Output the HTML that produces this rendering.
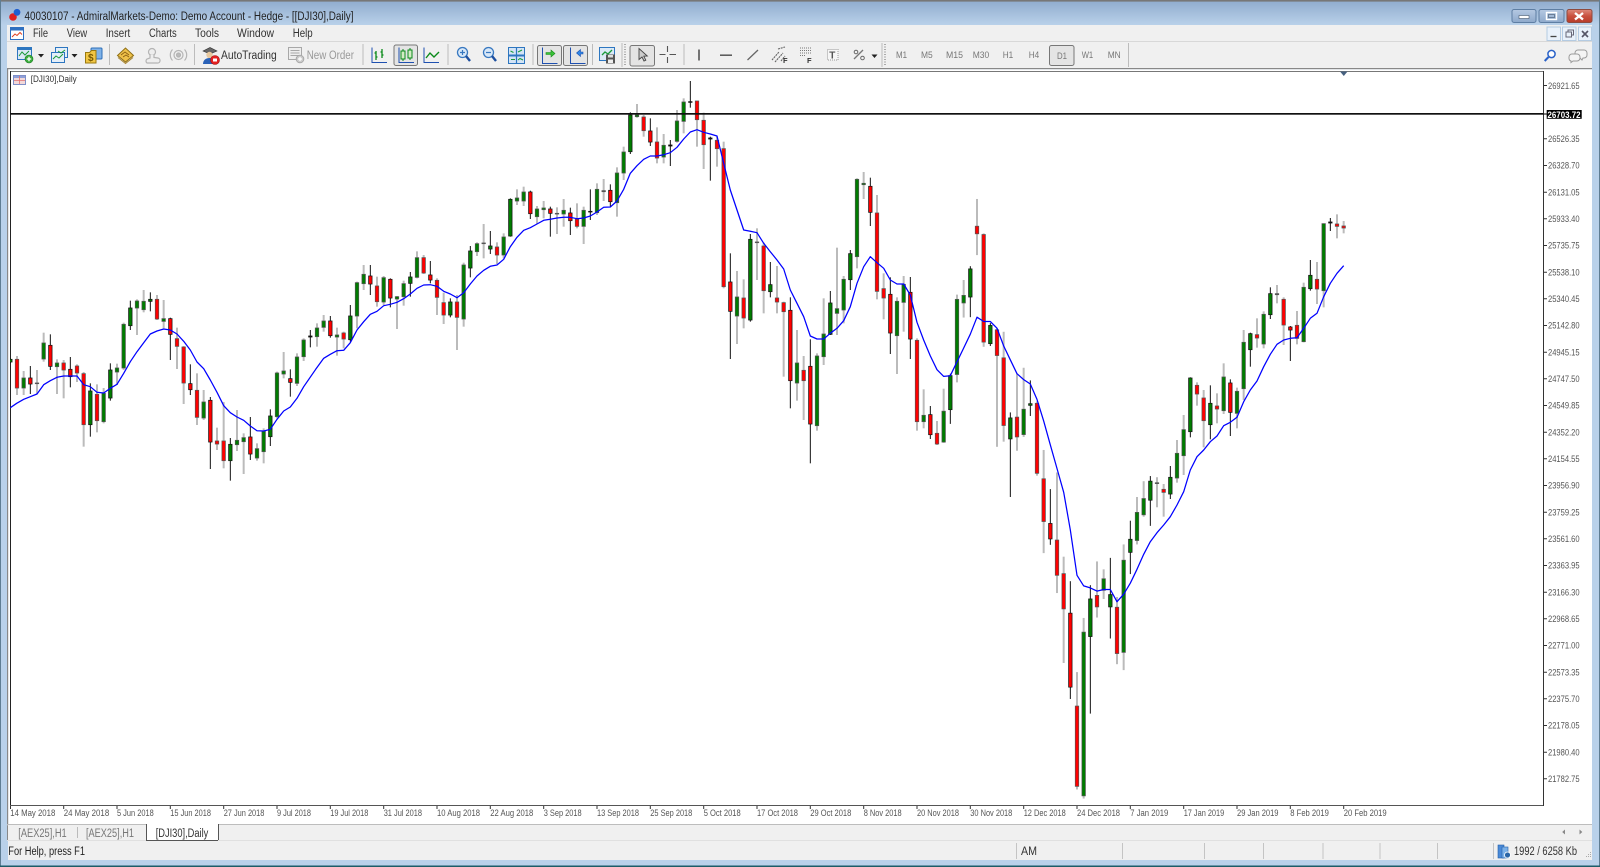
<!DOCTYPE html>
<html lang="en"><head><meta charset="utf-8"><title>40030107 - AdmiralMarkets-Demo</title>
<style>
html,body{margin:0;padding:0;background:#fff;width:1600px;height:867px;overflow:hidden}
svg#r{display:block;position:absolute;left:0;top:0;filter:blur(.35px)}
text{font-family:"Liberation Sans",sans-serif;fill:#222}
.t{font-size:11.5px}
.m{font-size:11.5px;fill:#333}
.d{font-size:9.6px;fill:#555}
.p{font-size:9.6px;fill:#555}
.f{font-size:9.6px;fill:#777}
.g{font-size:11.5px;fill:#777}
.n{fill:none}
</style></head><body>
<svg id="r" width="1600" height="867" viewBox="0 0 1600 867" xmlns="http://www.w3.org/2000/svg">
<defs>
<linearGradient id="tb" x1="0" y1="0" x2="0" y2="1"><stop offset="0" stop-color="#8fabcd"/><stop offset="1" stop-color="#b9d1ea"/></linearGradient>
<linearGradient id="btn" x1="0" y1="0" x2="0" y2="1"><stop offset="0" stop-color="#b5c9e2"/><stop offset="1" stop-color="#8ea9cb"/></linearGradient>
<linearGradient id="cl" x1="0" y1="0" x2="0" y2="1"><stop offset="0" stop-color="#dd8a7c"/><stop offset=".5" stop-color="#c9513f"/><stop offset="1" stop-color="#b83c2a"/></linearGradient>
<clipPath id="cc"><rect x="10" y="72" width="1533" height="733"/></clipPath>
</defs>
<!-- frame -->
<rect width="1600" height="867" fill="#b9d1ea"/>
<rect width="1600" height="25" fill="url(#tb)"/>
<rect width="1600" height="1.6" fill="#777"/>
<rect y="0" width="1" height="867" fill="#5f7d93"/>
<rect x="1599" y="0" width="1" height="867" fill="#5f7d93"/>
<rect y="865.5" width="1600" height="1.5" fill="#1c5c68"/>
<rect x="7" y="25" width="1585" height="16" fill="#f0f0f0"/>
<rect x="7" y="41" width="1585" height="1.4" fill="#d8d8d8"/>
<rect x="7" y="42" width="1585" height="26" fill="#f0f0f0"/>
<rect x="7" y="68" width="1585" height="1.3" fill="#888"/>
<rect x="8" y="69.3" width="1584" height="755" fill="#fff"/>
<rect x="7" y="68" width="1.2" height="772" fill="#888"/>
<rect x="7" y="824" width="1585" height="1.4" fill="#bdbdbd"/>
<rect x="8" y="825" width="1584" height="15" fill="#f0f0f0"/>
<rect x="7" y="840" width="1585" height="1" fill="#e0e0e0"/>
<rect x="8" y="841" width="1584" height="19" fill="#f0f0f0"/>

<!-- title bar -->
<circle cx="13" cy="17" r="3.8" fill="#e02020"/><circle cx="17" cy="12.3" r="3.4" fill="#1f5fd0"/>
<text class="t" x="24.5" y="20" textLength="329" lengthAdjust="spacingAndGlyphs">40030107 - AdmiralMarkets-Demo: Demo Account - Hedge - [[DJI30],Daily]</text>
<g stroke="#5e7ea3" stroke-width="1">
<rect x="1512" y="9.5" width="24" height="13" rx="2" fill="url(#btn)"/>
<rect x="1539" y="9.5" width="25" height="13" rx="2" fill="url(#btn)"/>
<rect x="1567" y="9.5" width="25" height="13" rx="2" fill="url(#cl)" stroke="#8e4a3e"/></g>
<rect x="1519" y="15.5" width="10" height="3" fill="#fff" stroke="#45566c" stroke-width=".6"/>
<rect x="1546.5" y="12.5" width="10" height="7" fill="none" stroke="#fff" stroke-width="1.4"/><rect x="1548.5" y="14.5" width="6" height="3" fill="none" stroke="#45566c" stroke-width=".6"/>
<path d="M1575 13l8 6.500M1583 13l-8 6.500" stroke="#fff" stroke-width="2.400"/>

<!-- menu -->
<g>
<rect x="10.500" y="27.500" width="13" height="12" fill="#fff" stroke="#2e6fc0"/><rect x="10.500" y="27.500" width="13" height="3" fill="#2e6fc0"/>
<path d="M12 37l3-3 2 1.500 3-3 2 2" fill="none" stroke="#e04020"/>
</g>
<text class="m" x="33" y="37" textLength="15" lengthAdjust="spacingAndGlyphs">File</text>
<text class="m" x="66.700" y="37" textLength="20.500" lengthAdjust="spacingAndGlyphs">View</text>
<text class="m" x="105.700" y="37" textLength="24.500" lengthAdjust="spacingAndGlyphs">Insert</text>
<text class="m" x="149" y="37" textLength="27.700" lengthAdjust="spacingAndGlyphs">Charts</text>
<text class="m" x="195" y="37" textLength="24" lengthAdjust="spacingAndGlyphs">Tools</text>
<text class="m" x="237" y="37" textLength="37" lengthAdjust="spacingAndGlyphs">Window</text>
<text class="m" x="292.700" y="37" textLength="20" lengthAdjust="spacingAndGlyphs">Help</text>
<g fill="#e9f1fa" stroke="#b4cbe2"><rect x="1547" y="27" width="13.500" height="13.500"/><rect x="1562.500" y="27" width="13.500" height="13.500"/><rect x="1578.500" y="27" width="13" height="13.500"/></g>
<path d="M1550.500 36.500h6" stroke="#444" stroke-width="1.300"/>
<path d="M1566 32h5.500v5h-5.500zM1568 32v-2h5.500v5h-2" fill="none" stroke="#667" stroke-width="1"/>
<path d="M1582 31l6 6M1588 31l-6 6" stroke="#556" stroke-width="1.600"/>

<!-- toolbar separators -->
<g fill="#bcbcbc"><rect x="109" y="44" width="1" height="21"/><rect x="194" y="44" width="1" height="21"/><rect x="362.500" y="44" width="1" height="21"/><rect x="447.500" y="44" width="1" height="21"/><rect x="532.500" y="44" width="1" height="21"/><rect x="592" y="44" width="1" height="21"/><rect x="621.500" y="43" width="1" height="24"/><rect x="683.500" y="44" width="1" height="21"/><rect x="881.500" y="43" width="1" height="24"/><rect x="1128" y="43" width="1" height="24"/></g>
<path d="M625 44v22M885 44v22" stroke="#aaa" stroke-width="2" stroke-dasharray="1 1.500"/>

<!-- new chart -->
<g transform="translate(17,47)"><rect x=".5" y=".5" width="14" height="12" fill="#dbe9f7" stroke="#2d76c0"/><rect x=".5" y=".5" width="14" height="2.500" fill="#2d76c0"/><path d="M2 9l3-4 3 3 4-4" fill="none" stroke="#1a9a3a"/><circle cx="12" cy="12" r="4" fill="#39ad3c" stroke="#1d7a22" stroke-width=".6"/><path d="M9.800 12h4.400M12 9.800v4.400" stroke="#fff" stroke-width="1.300"/></g>
<path d="M38 54h6l-3 3.500z" fill="#222"/>
<!-- profiles -->
<g transform="translate(51,47)"><rect x="4.500" y=".5" width="12" height="10" fill="#e5eff9" stroke="#2d76c0"/><rect x=".5" y="5.500" width="13" height="10" fill="#e5eff9" stroke="#2d76c0"/><path d="M2 12l3-3 3 2 4-4M7 4l3 2 4-3" fill="none" stroke="#1a9a3a"/></g>
<path d="M71.500 54h6l-3 3.500z" fill="#222"/>
<!-- market -->
<g transform="translate(85,47)"><rect x="6" y="1" width="11" height="11" rx="1" fill="#7fb2e8" stroke="#2e6fb8"/><path d="M.5 5.500h4l2-2h4.500v12.500h-10.500z" fill="#f1c644" stroke="#9a7a10"/><text x="3" y="14" style="font-size:10px;font-weight:bold;fill:#7a5a00">$</text></g>
<!-- book -->
<g transform="translate(117,47)"><path d="M.5 8.500l8-7.500 8 7.500-8 6.500z" fill="#eec14a" stroke="#8e6e14"/><path d="M4 8l4-3 4 3M6 10l3-2 3 2" fill="none" stroke="#8a5e10" stroke-width=".8"/><path d="M1 10.500l7.500 6 7.500-6" fill="none" stroke="#a98530"/></g>
<!-- cloud person -->
<g transform="translate(143,47)" fill="none" stroke="#b4b4b4" stroke-width="1.200"><circle cx="9" cy="5" r="3.500" fill="#eee"/><path d="M7 8v3l-3 1a2.500 2.500 0 0 0 0 4h10a2.500 2.500 0 0 0 1-5l-4-.5v-2.500" fill="#eee"/></g>
<!-- signal -->
<g transform="translate(170,47)" fill="none" stroke="#b4b4b4" stroke-width="1.200"><circle cx="8.500" cy="8" r="2" fill="#bbb"/><circle cx="8.500" cy="8" r="4.500"/><path d="M2.500 2.500a8 8 0 0 0 0 11M14.500 2.500a8 8 0 0 1 0 11"/></g>
<!-- autotrading -->
<g transform="translate(202,46)"><path d="M1 5l7-3.500 7 3.500-7 3z" fill="#666" stroke="#333" stroke-width=".6"/><circle cx="7.500" cy="9" r="3.200" fill="#e8c9a0"/><path d="M1 18c0-4 3-6 6.500-6s6 2 6 6z" fill="#2a62b8"/><circle cx="13" cy="14" r="4.500" fill="#e42020" stroke="#a01010" stroke-width=".6"/><rect x="11" y="12.500" width="4" height="3" fill="#fff"/></g>
<text class="m" x="221" y="59" textLength="55.700" lengthAdjust="spacingAndGlyphs">AutoTrading</text>
<!-- new order -->
<g transform="translate(288,47)" stroke="#a8a8a8" fill="none"><rect x=".5" y=".5" width="13" height="12" fill="#eee"/><path d="M2.500 3.500h9M2.500 6h9M2.500 8.500h9"/><circle cx="12" cy="12" r="3.800" fill="#ccc"/><path d="M10 12h4M12 10v4" stroke="#fff" stroke-width="1.200"/></g>
<text class="m" x="306.700" y="59" textLength="47.300" lengthAdjust="spacingAndGlyphs" style="fill:#999">New Order</text>

<!-- chart type -->
<g transform="translate(371,47)" fill="none"><path d="M1 .5v15h15" stroke="#1e50b0"/><path d="M5 4v9M3.500 6h1.500M5 10h1.500M11 2v9M9.500 5h1.500M11 8h1.500" stroke="#0a8a1a" stroke-width="1.300"/></g>
<rect x="394" y="45" width="23.500" height="20.500" rx="2" fill="#e4e4e4" stroke="#777"/>
<g transform="translate(398,47)"><path d="M1 .5v15h15" stroke="#1e50b0" fill="none"/><rect x="3" y="4" width="4" height="8" fill="#d4ecc4" stroke="#0a8a1a"/><rect x="10" y="3" width="4" height="8" fill="#d4ecc4" stroke="#0a8a1a"/><path d="M5 2v2M5 12v2M12 1v2M12 11v2" stroke="#0a8a1a"/></g>
<g transform="translate(423,47)" fill="none"><path d="M1 .5v15h15" stroke="#1e50b0"/><path d="M3 11l4-5 4 4 5-5" stroke="#0a8a1a" stroke-width="1.400"/></g>
<!-- zoom -->
<g transform="translate(457,47)" fill="none"><circle cx="5.500" cy="5.500" r="5" fill="#d8e8f8" stroke="#3878c0" stroke-width="1.300"/><path d="M9 9l4 5" stroke="#1e50a0" stroke-width="2.400"/><path d="M3 5.500h5M5.500 3v5" stroke="#3878c0" stroke-width="1.200"/></g>
<g transform="translate(483,47)" fill="none"><circle cx="5.500" cy="5.500" r="5" fill="#d8e8f8" stroke="#3878c0" stroke-width="1.300"/><path d="M9 9l4 5" stroke="#1e50a0" stroke-width="2.400"/><path d="M3 5.500h5" stroke="#3878c0" stroke-width="1.200"/></g>
<g transform="translate(508,47)"><rect x=".5" y=".5" width="16" height="16" fill="#d4e4f6" stroke="#2d76c0"/><path d="M8.500 0v17" stroke="#2d76c0" stroke-width="1.200"/><path d="M0 8.500h17" stroke="#2d76c0" stroke-width="2"/><path d="M2.500 4l3 1.500M10 5l4-2M3 12.500h4M10 13l2-1.500 3 1.500" stroke="#1a9a3a" fill="none"/></g>
<!-- shift -->
<rect x="537.500" y="45.500" width="24" height="20" rx="2" fill="#e4e4e4" stroke="#777"/>
<g transform="translate(541,47)"><path d="M1.500 .5v16h15" stroke="#1e50b0" fill="none"/><path d="M5 5.500h5v-2.500l4 3.500-4 3.500v-2.500h-5z" fill="#3ac23a" stroke="#1a8a1a" stroke-width=".6"/></g>
<rect x="563.500" y="45.500" width="24" height="20" rx="2" fill="#e4e4e4" stroke="#777"/>
<g transform="translate(567,47)"><path d="M3.500 .5v16h15" stroke="#1e50b0" fill="none"/><path d="M16 5h-2.500v-2.500l-4 3.500 4 3.500v-2.500h2.500z" fill="#2e86e6" stroke="#1e50b0" stroke-width=".6"/></g>
<!-- save chart -->
<g transform="translate(599,47)"><rect x=".5" y=".5" width="15" height="13" fill="#dbe9f7" stroke="#2d76c0"/><path d="M3 8l3-3 3 2 4-4" fill="none" stroke="#1a9a3a" stroke-width="1.300"/><rect x="7" y="7.500" width="9" height="9" fill="#555"/><rect x="9" y="8" width="5" height="2.500" fill="#ddd"/><rect x="9" y="12.500" width="5" height="3.500" fill="#eee"/></g>
<!-- cursor -->
<rect x="630" y="45.500" width="24.500" height="20.500" rx="2" fill="#e4e4e4" stroke="#777"/>
<path d="M639 48.500v11l3-2.500 2 4 1.800-.8-2-4 3.500-.2z" fill="#ccc" stroke="#444" stroke-width=".9"/>
<path d="M667.500 46v6M667.500 57v6M659.500 54.500h6M669.500 54.500h6.500" stroke="#555" stroke-width="1.100"/>
<path d="M699 49.500v11" stroke="#555" stroke-width="1.600"/>
<path d="M720 55.200h12" stroke="#555" stroke-width="1.500"/>
<path d="M747.500 60l10.500-10" stroke="#666" stroke-width="1.300"/>
<path d="M772 60l7-8M775 62l8-9M778 49l7-2M781 61l4-5" stroke="#666" stroke-width="1.100" fill="none" stroke-dasharray="2 .8"/><text x="783" y="63" style="font-size:7.500px;font-weight:bold;fill:#333">F</text>
<path d="M800 48h11M800 50.500h11M800 53h11M800 55.500h6" stroke="#777" stroke-width="1" stroke-dasharray="1 1" fill="none"/><text x="807" y="63" style="font-size:7.500px;font-weight:bold;fill:#333">F</text>
<rect x="827.500" y="49.500" width="10.500" height="10.500" fill="#f6f6f6" stroke="#999" stroke-dasharray="1 1"/><text x="829.200" y="58.500" style="font-size:10px;font-weight:bold;fill:#555">T</text>
<path d="M854 59l9-9" stroke="#777" stroke-width="1.300"/><circle cx="856" cy="52" r="1.800" fill="none" stroke="#666"/><circle cx="862.500" cy="58" r="1.800" fill="none" stroke="#666"/>
<path d="M871.500 54.500h6l-3 3.500z" fill="#222"/>
<!-- timeframes -->
<rect x="1049.500" y="45.500" width="24.500" height="20" rx="2" fill="#e4e4e4" stroke="#777"/>
<text class="f" x="896" y="58" textLength="11" lengthAdjust="spacingAndGlyphs">M1</text>
<text class="f" x="921" y="58" textLength="11.700" lengthAdjust="spacingAndGlyphs">M5</text>
<text class="f" x="946" y="58" textLength="17" lengthAdjust="spacingAndGlyphs">M15</text>
<text class="f" x="972.700" y="58" textLength="16.500" lengthAdjust="spacingAndGlyphs">M30</text>
<text class="f" x="1002.700" y="58" textLength="10.500" lengthAdjust="spacingAndGlyphs">H1</text>
<text class="f" x="1028.700" y="58" textLength="10.500" lengthAdjust="spacingAndGlyphs">H4</text>
<text class="f" x="1057" y="59" textLength="10" lengthAdjust="spacingAndGlyphs">D1</text>
<text class="f" x="1081.700" y="58" textLength="11.500" lengthAdjust="spacingAndGlyphs">W1</text>
<text class="f" x="1107.700" y="58" textLength="13" lengthAdjust="spacingAndGlyphs">MN</text>
<!-- search / chat -->
<circle cx="1551.500" cy="54" r="3.600" fill="#fff" stroke="#2a62c8" stroke-width="1.500"/><path d="M1548.500 57l-3.800 4" stroke="#2a62c8" stroke-width="2"/>
<g fill="#f4f4f4" stroke="#9a9a9a"><path d="M1578 50h6a3 3 0 0 1 3 3v2a3 3 0 0 1-3 3h-1l-1 2-2-2h-2a3 3 0 0 1-3-3v-2a3 3 0 0 1 3-3z"/><path d="M1572 54h5a3 3 0 0 1 3 3v1a3 3 0 0 1-3 3h-4l-2 1.500v-1.500a3 3 0 0 1-2-3v-1a3 3 0 0 1 3-3z"/></g>

<!-- chart frame -->
<rect x="10" y="71" width="1533.500" height="1" fill="#777"/>
<rect x="10" y="71" width="1" height="735" fill="#222"/>
<rect x="10" y="805" width="1534" height="1" fill="#555"/>
<rect x="1543" y="71" width="1" height="735" fill="#333"/>
<path d="M1340 71.500h7.500l-3.700 4.500z" fill="#46607f"/>
<g transform="translate(13,75)"><rect x=".5" y=".5" width="12" height="9" fill="#f3d9d9" stroke="#7f8fc8"/><rect x="1" y="1" width="11" height="2" fill="#8f9fd8"/><path d="M6.500 1v8M1 5.500h11" stroke="#e07070" stroke-width=".8"/></g>
<text class="d" x="30.700" y="82" textLength="46" lengthAdjust="spacingAndGlyphs" style="fill:#333">[DJI30],Daily</text>

<g id="c"></g>

<rect x="10" y="113" width="1533" height="1.700" fill="#111"/>

<!-- price axis -->
<g class="p">
<path d="M1543 85.500h4M1543 138.800h4M1543 165.500h4M1543 192.200h4M1543 218.800h4M1543 245.500h4M1543 272.200h4M1543 298.800h4M1543 325.500h4M1543 352.200h4M1543 378.800h4M1543 405.500h4M1543 432.200h4M1543 458.800h4M1543 485.500h4M1543 512.200h4M1543 538.800h4M1543 565.500h4M1543 592.200h4M1543 618.800h4M1543 645.500h4M1543 672.200h4M1543 698.800h4M1543 725.500h4M1543 752.200h4M1543 778.800h4" stroke="#333" fill="none"/>
<text class="p" x="1548" y="88.800" textLength="31.600" lengthAdjust="spacingAndGlyphs">26921.65</text>
<text class="p" x="1548" y="142" textLength="31.600" lengthAdjust="spacingAndGlyphs">26526.35</text>
<text class="p" x="1548" y="168.700" textLength="31.600" lengthAdjust="spacingAndGlyphs">26328.70</text>
<text class="p" x="1548" y="195.400" textLength="31.600" lengthAdjust="spacingAndGlyphs">26131.05</text>
<text class="p" x="1548" y="222" textLength="31.600" lengthAdjust="spacingAndGlyphs">25933.40</text>
<text class="p" x="1548" y="248.700" textLength="31.600" lengthAdjust="spacingAndGlyphs">25735.75</text>
<text class="p" x="1548" y="275.400" textLength="31.600" lengthAdjust="spacingAndGlyphs">25538.10</text>
<text class="p" x="1548" y="302" textLength="31.600" lengthAdjust="spacingAndGlyphs">25340.45</text>
<text class="p" x="1548" y="328.700" textLength="31.600" lengthAdjust="spacingAndGlyphs">25142.80</text>
<text class="p" x="1548" y="355.400" textLength="31.600" lengthAdjust="spacingAndGlyphs">24945.15</text>
<text class="p" x="1548" y="382" textLength="31.600" lengthAdjust="spacingAndGlyphs">24747.50</text>
<text class="p" x="1548" y="408.700" textLength="31.600" lengthAdjust="spacingAndGlyphs">24549.85</text>
<text class="p" x="1548" y="435.400" textLength="31.600" lengthAdjust="spacingAndGlyphs">24352.20</text>
<text class="p" x="1548" y="462" textLength="31.600" lengthAdjust="spacingAndGlyphs">24154.55</text>
<text class="p" x="1548" y="488.700" textLength="31.600" lengthAdjust="spacingAndGlyphs">23956.90</text>
<text class="p" x="1548" y="515.400" textLength="31.600" lengthAdjust="spacingAndGlyphs">23759.25</text>
<text class="p" x="1548" y="542" textLength="31.600" lengthAdjust="spacingAndGlyphs">23561.60</text>
<text class="p" x="1548" y="568.700" textLength="31.600" lengthAdjust="spacingAndGlyphs">23363.95</text>
<text class="p" x="1548" y="595.400" textLength="31.600" lengthAdjust="spacingAndGlyphs">23166.30</text>
<text class="p" x="1548" y="622" textLength="31.600" lengthAdjust="spacingAndGlyphs">22968.65</text>
<text class="p" x="1548" y="648.700" textLength="31.600" lengthAdjust="spacingAndGlyphs">22771.00</text>
<text class="p" x="1548" y="675.400" textLength="31.600" lengthAdjust="spacingAndGlyphs">22573.35</text>
<text class="p" x="1548" y="702" textLength="31.600" lengthAdjust="spacingAndGlyphs">22375.70</text>
<text class="p" x="1548" y="728.700" textLength="31.600" lengthAdjust="spacingAndGlyphs">22178.05</text>
<text class="p" x="1548" y="755.400" textLength="31.600" lengthAdjust="spacingAndGlyphs">21980.40</text>
<text class="p" x="1548" y="782" textLength="31.600" lengthAdjust="spacingAndGlyphs">21782.75</text>
</g>
<rect x="1546.700" y="110" width="35" height="8.800" fill="#000"/>
<rect x="1543" y="113.500" width="4" height="1" fill="#000"/>
<text x="1547.500" y="117.800" textLength="33" lengthAdjust="spacingAndGlyphs" style="font-size:9.600px;fill:#fff;font-weight:bold">26703.72</text>

<!-- time axis -->
<path d="M10.500 806v3M63.700 806v3M117 806v3M170.300 806v3M223.700 806v3M277 806v3M330.300 806v3M383.700 806v3M437 806v3M490.300 806v3M543.700 806v3M597 806v3M650.300 806v3M703.700 806v3M757 806v3M810.300 806v3M863.700 806v3M917 806v3M970.300 806v3M1023.700 806v3M1077 806v3M1130.300 806v3M1183.700 806v3M1237 806v3M1290.300 806v3M1343.700 806v3" stroke="#333" fill="none"/>
<text class="d" x="10.300" y="816" textLength="45" lengthAdjust="spacingAndGlyphs">14 May 2018</text>
<text class="d" x="63.700" y="816" textLength="45.500" lengthAdjust="spacingAndGlyphs">24 May 2018</text>
<text class="d" x="117" y="816" textLength="36.700" lengthAdjust="spacingAndGlyphs">5 Jun 2018</text>
<text class="d" x="170.300" y="816" textLength="40.700" lengthAdjust="spacingAndGlyphs">15 Jun 2018</text>
<text class="d" x="223.700" y="816" textLength="40.700" lengthAdjust="spacingAndGlyphs">27 Jun 2018</text>
<text class="d" x="277" y="816" textLength="34" lengthAdjust="spacingAndGlyphs">9 Jul 2018</text>
<text class="d" x="330.300" y="816" textLength="38" lengthAdjust="spacingAndGlyphs">19 Jul 2018</text>
<text class="d" x="383.700" y="816" textLength="38.300" lengthAdjust="spacingAndGlyphs">31 Jul 2018</text>
<text class="d" x="437" y="816" textLength="43" lengthAdjust="spacingAndGlyphs">10 Aug 2018</text>
<text class="d" x="490.300" y="816" textLength="43" lengthAdjust="spacingAndGlyphs">22 Aug 2018</text>
<text class="d" x="543.700" y="816" textLength="38" lengthAdjust="spacingAndGlyphs">3 Sep 2018</text>
<text class="d" x="597" y="816" textLength="42" lengthAdjust="spacingAndGlyphs">13 Sep 2018</text>
<text class="d" x="650.300" y="816" textLength="42" lengthAdjust="spacingAndGlyphs">25 Sep 2018</text>
<text class="d" x="703.700" y="816" textLength="37" lengthAdjust="spacingAndGlyphs">5 Oct 2018</text>
<text class="d" x="757" y="816" textLength="41" lengthAdjust="spacingAndGlyphs">17 Oct 2018</text>
<text class="d" x="810.300" y="816" textLength="41" lengthAdjust="spacingAndGlyphs">29 Oct 2018</text>
<text class="d" x="863.700" y="816" textLength="38" lengthAdjust="spacingAndGlyphs">8 Nov 2018</text>
<text class="d" x="917" y="816" textLength="42" lengthAdjust="spacingAndGlyphs">20 Nov 2018</text>
<text class="d" x="970.300" y="816" textLength="42" lengthAdjust="spacingAndGlyphs">30 Nov 2018</text>
<text class="d" x="1023.700" y="816" textLength="42" lengthAdjust="spacingAndGlyphs">12 Dec 2018</text>
<text class="d" x="1077" y="816" textLength="43" lengthAdjust="spacingAndGlyphs">24 Dec 2018</text>
<text class="d" x="1130.300" y="816" textLength="38" lengthAdjust="spacingAndGlyphs">7 Jan 2019</text>
<text class="d" x="1183.700" y="816" textLength="40.500" lengthAdjust="spacingAndGlyphs">17 Jan 2019</text>
<text class="d" x="1237" y="816" textLength="41.500" lengthAdjust="spacingAndGlyphs">29 Jan 2019</text>
<text class="d" x="1290.300" y="816" textLength="38.600" lengthAdjust="spacingAndGlyphs">8 Feb 2019</text>
<text class="d" x="1343.700" y="816" textLength="43" lengthAdjust="spacingAndGlyphs">20 Feb 2019</text>

<!-- tabs -->
<rect x="146.500" y="824" width="72" height="16" fill="#fff"/>
<path d="M146.500 824v16.500h71.500M218.500 824v16" fill="none" stroke="#555"/>
<rect x="77" y="827" width="1" height="11" fill="#bbb"/>
<text class="g" x="18.300" y="837" textLength="48.400" lengthAdjust="spacingAndGlyphs">[AEX25],H1</text>
<text class="g" x="86" y="837" textLength="48" lengthAdjust="spacingAndGlyphs">[AEX25],H1</text>
<text class="m" x="155.700" y="837" textLength="52.600" lengthAdjust="spacingAndGlyphs">[DJI30],Daily</text>
<path d="M1565 829.500v5l-2.800-2.500zM1579.500 829.500v5l2.800-2.500z" fill="#888"/>

<!-- status -->
<text class="m" x="8.300" y="855" textLength="76.700" lengthAdjust="spacingAndGlyphs" style="fill:#222">For Help, press F1</text>
<text class="m" x="1021" y="855" textLength="16" lengthAdjust="spacingAndGlyphs">AM</text>
<g fill="#c4c4c4"><rect x="1016" y="843" width="1" height="16"/><rect x="1122" y="843" width="1" height="16"/><rect x="1204" y="843" width="1" height="16"/><rect x="1263" y="843" width="1" height="16"/><rect x="1322.500" y="843" width="1" height="16"/><rect x="1379.500" y="843" width="1" height="16"/><rect x="1437" y="843" width="1" height="16"/><rect x="1493" y="843" width="1" height="16"/></g>
<rect x="1498" y="845" width="6" height="13" fill="#4a8ad8" stroke="#2460a8" stroke-width=".6"/><rect x="1502" y="847" width="6" height="11" fill="#7ab0e8" stroke="#2460a8" stroke-width=".6"/><circle cx="1507.500" cy="855" r="3" fill="#2a66a8" stroke="#fff" stroke-width=".8"/>
<text class="m" x="1514" y="855" textLength="63" lengthAdjust="spacingAndGlyphs">1992 / 6258 Kb</text>
<path d="M1590 852h1v1h-1zM1588 854h1v1h-1zM1590 854h1v1h-1zM1586 856h1v1h-1zM1588 856h1v1h-1zM1590 856h1v1h-1z" fill="#aaa"/>
</svg>
<script>
(function(){
var S=[
[0,270,3,"265 268 276 280 g;258 268 354 375 r;303 324 354 375 g;288 324 342 372 r;300 339 341 372 g;188 219 267 275 g;193 226 289 300 r;268 279 290 372 g;270 279 300 385 r;261 298 320 352 r;283 288 309 336 r;306 311 464 530 r;340 363 464 500 g;343 373 452 487 r;354 370 455 460 g;280 300 384 392 g;281 294 306 345 g;158 163 294 300 g;92 114 167 180 g;88 93 114 195 g;60 94 119 127 g;67 88 94 124 g;75 88 147 150 r;90 146 154 175 g;143 146 193 270 r;173 206 229 297 r;228 231 339 402 r;283 341 359 375 r;310 361 442 465 r;360 396 444 450 g;381 391 516 597 r;473 513 522 540 r;396 513 572 595 r;504 523 572 632 g;420 511 524 543 g;490 503 515 612 g;441 501 552 570 r;520 536 564 572 g;475 484 545 580 g;418 438 500 528 g;305 309 440 445 g;246 303 312 325 g;298 326 337 380 r;250 261 340 348 g"],
[44,70,3,"805 810 860 873 g;780 798 801 832 g;760 774 800 830 g;735 753 772 785 g;738 753 797 803 r;773 795 801 857 g;785 789 807 835 r;705 738 809 815 g;635 638 738 775 g;585 613 641 660 g;585 618 642 675 r;620 648 695 710 r;618 623 696 705 g;625 628 684 712 r;678 680 687 777 g;632 641 680 707 g;606 621 640 680 g;544 563 622 625 g;555 563 609 612 r;573 615 630 640 r;625 631 682 735 r;668 698 735 762 r;685 696 735 742 g;675 696 742 840 r;578 585 747 770 g;528 543 594 622 g;517 521 545 558 g;462 519 521 565 g;483 528 537 552 g;517 531 555 582 r;490 501 555 565 g;385 388 498 500 g;358 384 393 405 g;350 366 393 408 g;362 366 431 447 r;408 417 440 462 g;393 414 419 445 g;410 417 430 500 r;412 430 432 492 g;387 421 432 470 g;413 429 452 495 r;400 448 469 475 r;410 421 469 522 g;358 424 426 450 g;340 358 428 435 g;327 362 365 393 g;343 361 395 412 r;292 309 398 440 g"],
[92,70,3,"230 246 309 330 g;127 135 245 252 g;102 135 140 143 g;135 141 182 200 r;145 183 216 228 r;172 216 264 280 r;192 226 261 280 g;210 225 228 288 g;120 153 214 218 g;85 96 154 190 g;33 95 97 113 g;93 93 149 230 r;128 151 224 297 r;200 204 207 332 g;200 211 236 290 r;215 236 650 655 r;550 636 724 867 r;603 681 738 822 g;628 684 744 775 r;492 508 750 755 g;475 516 518 630 g;518 528 662 730 r;576 644 665 682 g;588 684 696 730 r;695 698 725 920 r;682 721 932 1015 r;780 879 939 992 g;858 901 932 1050 r;808 889 1062 1180 r;850 858 1067 1082 g;685 792 860 885 g;663 699 793 795 g;533 716 730 795 g;618 628 720 760 g;540 551 629 660 g;325 328 560 595 g;306 340 344 387 g;323 349 427 468 r;375 429 664 688 r;610 656 684 748 r;622 673 789 852 r;682 694 797 912 g;618 643 697 785 g;621 667 807 867 r;805 811 1055 1082 r;958 1036 1055 1075 g;1008 1034 1094 1107 r;1053 1090 1122 1125 r"],
[140,180,2.53,"528 585 663 665 g;490 495 581 617 g;290 302 492 512 g;253 292 311 348 g;218 225 296 347 g;48 117 136 190 r;135 138 410 422 r;362 368 414 420 g;375 379 444 675 r;384 450 621 662 r;588 602 655 802 g;490 600 650 685 r;475 580 644 650 g;507 566 570 597 g;560 565 742 748 r;683 756 864 944 r;782 869 908 923 r;740 911 1000 1045 r;953 996 1085 1222 r;1015 1096 1283 1313 r;1245 1331 1534 1542 r;1108 1144 1558 1565 g;1025 1060 1155 1350 g;965 1051 1080 1107 r;985 1009 1038 1060 g;956 1049 1080 1160 g;1055 1081 1198 1225 r;922 962 1195 1240 g;862 909 942 997 g;802 841 912 922 g;762 806 847 852 g;749 762 810 875 g;752 766 768 828 g"],
[173,200,3,"852 868 877 950 r;798 832 882 897 g;720 760 834 848 g;645 689 767 825 g;532 534 695 712 g;547 556 582 617 r;570 594 662 742 r;556 610 674 718 g;580 618 627 670 r;490 531 632 642 g;538 549 637 708 r;563 574 640 685 g;390 427 566 600 g;398 401 449 500 g;355 404 414 443 r;334 343 432 445 g;262 281 344 357 g;255 281 284 310 g;292 298 375 435 r;378 381 390 483 r;333 376 415 433 r;248 262 425 427 g;180 226 266 272 g;186 238 267 312 r;70 71 272 322 g;54 66 69 93 g;43 72 79 115 r;63 78 84 100 r"]
];
var NS=[[0,270,3,"31,413 50,400 71,388 91,380 111,372 131,344 151,332 171,322 191,318 211,318 231,318 251,344 271,350 291,367 311,369 331,355 351,343 371,310 391,275 411,245 431,218 451,192 471,183 491,177 511,180 531,192 551,214 571,240 591,276 611,296 631,330 651,367 671,407 691,428 711,441 731,451 751,468 771,482 791,483 811,478 831,448 851,423 871,411 891,385"],
[300,70,3,"11,950 47,898 71,865 91,853 111,842 131,841 151,818 171,780 191,755 211,733 231,724 251,707 271,703 291,697 311,686 331,672 351,655 371,645 391,644 411,649 431,664 451,672 471,683 491,668 511,642 531,618 551,601 571,589 591,585 611,568 631,530 651,502 671,481 691,473 711,462 731,451 751,448 771,444 791,442 811,442 831,446 851,444 871,438 891,426 911,412 931,411 951,393"],
[620,70,3,"11,358 31,310 51,287 71,268 91,258 111,258 131,254 151,248 171,232 191,207 211,186 231,179 251,187 271,192 291,198 311,280 331,360 351,420 371,480 391,484 411,488 431,520 451,545 471,570 491,597 511,660 531,700 551,740 571,798 591,807 611,807 631,790 651,775 671,752 691,710 711,640 731,590 751,560 771,578 791,595 811,630 831,642 851,642 871,675"],
[900,180,2.53,"51,360 71,405 91,445 111,480 131,497 151,495 171,460 191,425 211,390 231,347 251,358 271,358 291,375 311,420 331,455 351,490 371,505 391,516 411,555 431,610 451,670 471,730 491,790 511,885 531,1000 551,1027 571,1032 591,1040 611,1036 631,1036 651,1067 671,1048 691,1020 711,985 731,947 751,915"],
[1130,200,3,"81,998 101,975 121,950 141,915 161,875 181,810 201,770 221,750 241,725 261,708 281,677 301,667 321,652 341,605 361,570 381,543 401,500 421,463 441,433 461,420 481,415 501,413 521,385 541,355 561,340 581,290 601,250 621,220 641,197"]];
var h='<g clip-path="url(#cc)">';
function r(x,y,w,ht,f){return '<rect x="'+x.toFixed(2)+'" y="'+y.toFixed(2)+'" width="'+w+'" height="'+Math.max(ht,0).toFixed(2)+'" fill="'+f+'"/>';}
S.forEach(function(s){
  s[3].split(';').forEach(function(c,n){
    var p=c.split(' '),i=s[0]+n,k=s[2],y0=s[1];
    var hi=y0+p[0]/k,t=y0+p[1]/k,b=y0+p[2]/k,l=y0+p[3]/k,red=p[4]=='r';
    var cx=10.33+6.6667*i,sharp=i%3==0;
    if(sharp){h+=r(cx-.5,hi,1,l-hi,'#111');}
    else{h+=r(cx-1,hi,2,l-hi,'#bbb');}
    var edge=sharp?'#111':'#555';
    h+=r(cx-2.1,t-.4,4.2,Math.max(b-t+.8,1.1),edge);
    if(b-t>1.2){h+=r(cx-1.4,t+.3,2.8,b-t-.6,red?'#ff0000':'#007c00');}
  });
});
var pts=[];
NS.forEach(function(s){
  s[3].split(' ').forEach(function(q){
    var a=q.split(',');
    pts.push((s[0]+a[0]/3).toFixed(1)+','+(s[1]+a[1]/s[2]).toFixed(1));
  });
});
h+='<polyline fill="none" stroke="#0000ff" stroke-width="1.25" stroke-linejoin="round" points="'+pts.join(' ')+'"/>';
h+='</g>';
document.getElementById('c').innerHTML=h;
})();
</script>
</body></html>
